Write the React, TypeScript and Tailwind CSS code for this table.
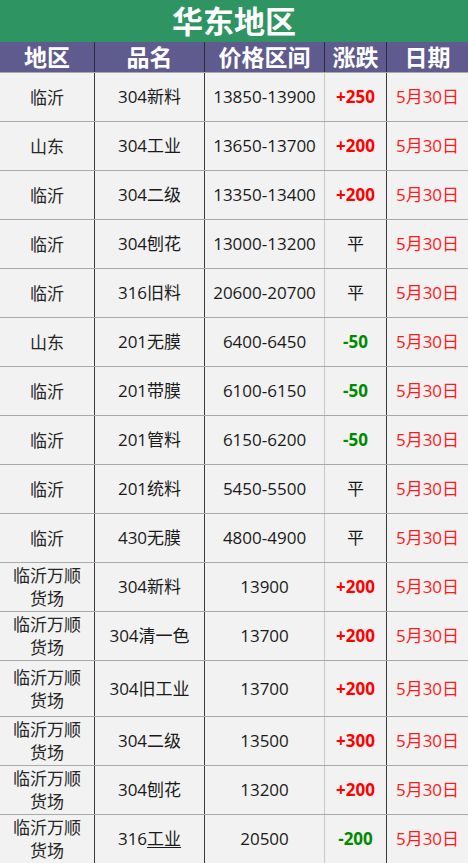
type Row = {
  area: string
  name: string
  price: string
  change: string
  tall?: boolean
  underline?: boolean
}

const rows: Row[] = [
  { area: '临沂', name: '304新料', price: '13850-13900', change: '+250' },
  { area: '山东', name: '304工业', price: '13650-13700', change: '+200' },
  { area: '临沂', name: '304二级', price: '13350-13400', change: '+200' },
  { area: '临沂', name: '304刨花', price: '13000-13200', change: '平' },
  { area: '临沂', name: '316旧料', price: '20600-20700', change: '平' },
  { area: '山东', name: '201无膜', price: '6400-6450', change: '-50' },
  { area: '临沂', name: '201带膜', price: '6100-6150', change: '-50' },
  { area: '临沂', name: '201管料', price: '6150-6200', change: '-50' },
  { area: '临沂', name: '201统料', price: '5450-5500', change: '平' },
  { area: '临沂', name: '430无膜', price: '4800-4900', change: '平' },
  { area: '万顺', name: '304新料', price: '13900', change: '+200' },
  { area: '万顺', name: '304清一色', price: '13700', change: '+200' },
  { area: '万顺', name: '304旧工业', price: '13700', change: '+200', tall: true },
  { area: '万顺', name: '304二级', price: '13500', change: '+300' },
  { area: '万顺', name: '304刨花', price: '13200', change: '+200' },
  { area: '万顺', name: '316工业', price: '20500', change: '-200', underline: true },
]

const cols = 'grid grid-cols-[95px_110px_120px_62px_81px]'

function Change({ v }: { v: string }) {
  if (v.startsWith('+')) return <span className="font-bold text-[#ff0000]">{v}</span>
  if (v.startsWith('-')) return <span className="font-bold text-[#008a00]">{v}</span>
  return <span className="text-[#1a1a1a]">{v}</span>
}

export default function App() {
  return (
    <div
      className="w-[468px] h-[863px] overflow-hidden bg-[#f2f2f2]"
      style={{ fontFamily: '"Open Sans", "Noto Sans CJK SC", sans-serif' }}
    >
      <div className="h-[42px] bg-[#2e9462] flex items-center justify-center text-white text-[31px] font-bold leading-none">
        华东地区
      </div>
      <div className={`${cols} h-[30px] bg-[#5f5b8f] text-white text-[23px] font-bold leading-none`}>
        <div className="flex items-center justify-center border-r border-[#2b2b3f]">地区</div>
        <div className="flex items-center justify-center border-r border-[#2b2b3f]">品名</div>
        <div className="flex items-center justify-center border-r border-[#2b2b3f]">价格区间</div>
        <div className="flex items-center justify-center border-r border-[#2b2b3f]">涨跌</div>
        <div className="flex items-center justify-center">日期</div>
      </div>
      {rows.map((r, i) => (
        <div
          key={i}
          className={`${cols} ${r.tall ? 'h-[56px]' : 'h-[49px]'} border-t border-[#a9a9a9] text-[17px] text-[#1a1a1a]`}
        >
          <div className="flex items-center justify-center border-r border-[#3a3a3a] text-center leading-[23px] text-[#262626]">
            {r.area === '万顺' ? (
              <span>
                临沂万顺
                <br />
                货场
              </span>
            ) : (
              r.area
            )}
          </div>
          <div className="flex items-center justify-center border-r border-[#3a3a3a]">
            {r.underline ? (
              <span>
                316<span className="underline underline-offset-2">工业</span>
              </span>
            ) : (
              r.name
            )}
          </div>
          <div className="flex items-center justify-center border-r border-[#c8c8c8]">{r.price}</div>
          <div className="flex items-center justify-center border-r border-[#3a3a3a]">
            <Change v={r.change} />
          </div>
          <div className="flex items-center justify-center text-[#ff1a1a]">5月30日</div>
        </div>
      ))}
    </div>
  )
}
